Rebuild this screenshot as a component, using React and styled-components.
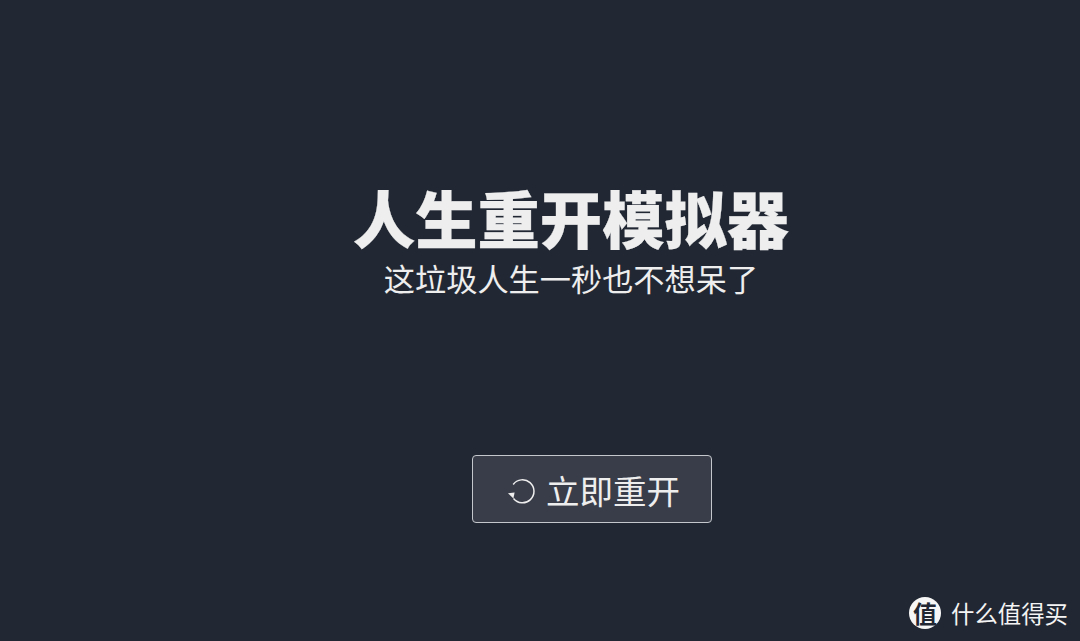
import React from 'react';
import styled, { createGlobalStyle } from 'styled-components';

const cjk = '"Noto Sans CJK SC", "Liberation Sans", sans-serif';

const GlobalStyle = createGlobalStyle`
  html, body {
    margin: 0;
    padding: 0;
    background: #222833;
  }
`;

const Page = styled.div`
  position: relative;
  display: flex;
  flex-direction: column;
  align-items: center;
  box-sizing: border-box;
  width: 1080px;
  height: 641px;
  padding: 178px 0 0 64px;
  overflow: hidden;
  background: #222833;
  font-family: ${cjk};
`;

const Title = styled.h1`
  margin: 0 2px 0 0;
  font-size: 62.3px;
  line-height: 78px;
  font-weight: 900;
  white-space: nowrap;
  color: #eeeeee;
  -webkit-text-stroke: 0.25px #eeeeee;
`;

const Subtitle = styled.p`
  margin: 0 2px 0 0;
  font-size: 31.2px;
  line-height: 44px;
  font-weight: 400;
  white-space: nowrap;
  color: #eeeeee;
`;

const RestartButton = styled.button`
  display: flex;
  align-items: center;
  justify-content: center;
  gap: 11px;
  box-sizing: border-box;
  width: 240px;
  height: 68px;
  margin: 155px 0 0 40px;
  padding: 2px 0 0 3px;
  border: 1px solid #c4c7cc;
  border-radius: 4px;
  background: #393d49;
  color: #eeeeee;
  font-family: ${cjk};
  font-size: 33.5px;
  line-height: 48px;
  font-weight: 400;
`;

const Watermark = styled.div`
  position: absolute;
  right: 12px;
  bottom: 12px;
  display: flex;
  align-items: center;
  gap: 10px;
  color: #f4f4f4;
  font-size: 23.4px;
  line-height: 32px;
`;

const Badge = styled.span`
  display: flex;
  align-items: center;
  justify-content: center;
  width: 32px;
  height: 32px;
  border-radius: 50%;
  background: #f6f6f6;
  color: #222833;
  font-size: 24px;
  font-weight: 700;
`;

function RestartIcon() {
  return (
    <svg width="28" height="28" viewBox="0 0 28 28" fill="none">
      <path d="M6.2 8.5 A11.5 11.5 0 1 1 6.5 22.5" stroke="#eeeeee" strokeWidth="1.5" />
      <path d="M1 17.2 L7.6 16.6 L6.4 22.6 Z" fill="#eeeeee" />
    </svg>
  );
}

export default function App() {
  return (
    <Page>
      <GlobalStyle />
      <Title>人生重开模拟器</Title>
      <Subtitle>这垃圾人生一秒也不想呆了</Subtitle>
      <RestartButton>
        <RestartIcon />
        立即重开
      </RestartButton>
      <Watermark>
        <Badge>值</Badge>
        什么值得买
      </Watermark>
    </Page>
  );
}
